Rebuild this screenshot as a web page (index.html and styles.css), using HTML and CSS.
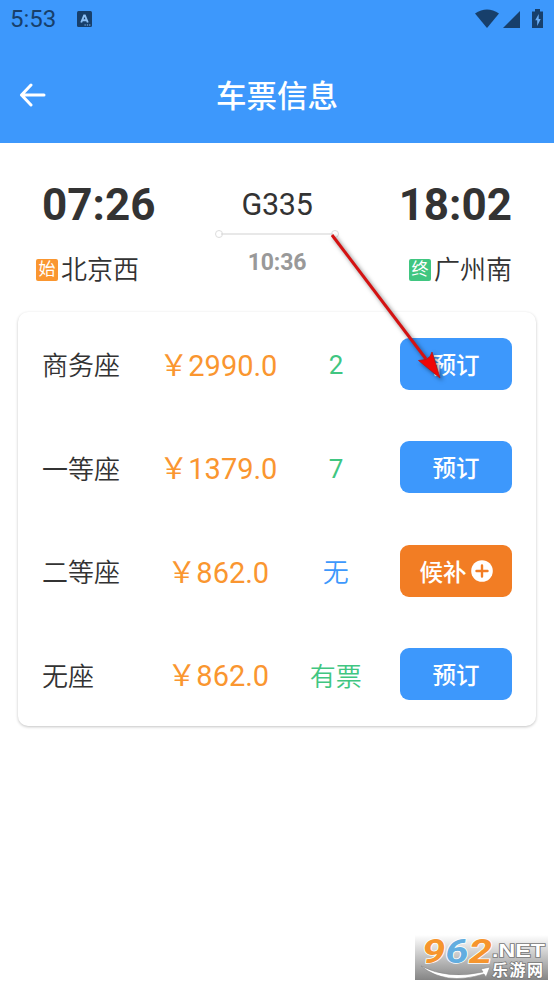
FILE: index.html
```html
<!DOCTYPE html>
<html lang="zh-CN">
<head>
<meta charset="utf-8">
<title>车票信息</title>
<link rel="stylesheet" href="styles.css">
</head>
<body>
<header class="header">
  <div class="status">
    <span class="clock">5:53</span>
    <svg class="app-icon" width="15" height="16" viewBox="0 0 15 16"><rect width="15" height="16" rx="1.5" fill="#173f6b"/><path d="M4.2 11.5 7.1 4.5h.8l2.9 7M5.4 9.3h4.2" fill="none" stroke="#8dc0f5" stroke-width="1.9"/><path d="M7.5 14h6" stroke="#8dc0f5" stroke-dasharray="1.3 1"/></svg>
    <svg class="system" width="69" height="20" viewBox="0 0 69 20"><g fill="#173f6b"><path d="M0 4.5Q12-3.5 24 4.5L12 19Z"/><path d="M28 19H45V2Z"/><path d="M57 2.500h3V0h5v2.500h3v16.500H57Z"/></g><path d="M63.7 5 60.2 11.3H62.2V17L65.7 10H63.7Z" fill="#69adf5"/></svg>
  </div>
  <div class="titlebar">
    <svg class="back" width="28" height="24" viewBox="0 0 28 24"><path d="M12 2 2.500 12 12 22M2.500 12H25" fill="none" stroke="#fff" stroke-width="3" stroke-linecap="round" stroke-linejoin="round"/></svg>
    <h1 class="title">车票信息</h1>
  </div>
</header>
<main>
  <section class="trip">
    <div class="end">
      <div class="time">07:26</div>
      <div class="station"><span class="tag tag-start">始</span>北京西</div>
    </div>
    <div class="train">
      <div class="number">G335</div>
      <div class="route"></div>
      <div class="duration">10:36</div>
    </div>
    <div class="end end-right">
      <div class="time">18:02</div>
      <div class="station"><span class="tag tag-end">终</span>广州南</div>
    </div>
  </section>
  <section class="card">
    <div class="row"><span class="seat">商务座</span><span class="price">￥2990.0</span><span class="left num">2</span><button class="btn">预订</button></div>
    <div class="row"><span class="seat">一等座</span><span class="price">￥1379.0</span><span class="left num">7</span><button class="btn">预订</button></div>
    <div class="row"><span class="seat">二等座</span><span class="price">￥862.0</span><span class="left none">无</span><button class="btn wait">候补<svg width="22" height="22" viewBox="0 0 22 22"><circle cx="11" cy="11" r="10.8" fill="#fff"/><path d="M11 5.5v11M5.5 11h11" stroke="#f27d24" stroke-width="2.4" stroke-linecap="round"/></svg></button></div>
    <div class="row"><span class="seat">无座</span><span class="price">￥862.0</span><span class="left">有票</span><button class="btn">预订</button></div>
  </section>
</main>
<svg class="pointer" width="130" height="160" viewBox="0 0 130 160"><path d="M7 6 101 130" stroke="#d41212" stroke-width="3"/><path d="M115 149 93.500 131.500 101 130.500 105 127.500 107 123Z" fill="#f00505" stroke="#b91414" stroke-width=".8"/></svg>
<svg class="watermark" width="133" height="45" viewBox="0 0 133 45">
  <defs><linearGradient id="shade" x1="0" y1="0" x2="0" y2="1"><stop offset="0" stop-color="#fff"/><stop offset="1" stop-color="#858585"/></linearGradient></defs>
  <rect width="133" height="45" fill="url(#shade)"/>
  <text class="digits" x="7" y="28" textLength="70" lengthAdjust="spacingAndGlyphs"><tspan fill="#f6952d">9</tspan><tspan fill="#62ade0">6</tspan><tspan fill="#f6952d">2</tspan></text>
  <path d="M6 31Q33 45 68 37L66 34 75 32 71 42 69 39Q30 51 6 31Z" fill="#fff" stroke="#888" stroke-width=".6"/>
  <text class="net" x="77" y="22" textLength="53" lengthAdjust="spacingAndGlyphs">.NET</text>
  <text class="brand" x="77" y="41" textLength="51">乐游网</text>
</svg>
</body>
</html>
```
FILE: styles.css
```css
* { box-sizing: border-box; }
body {
  margin: 0;
  height: 986px;
  overflow: hidden;
  position: relative;
  background: #fff;
  color: #333;
  font-family: Roboto, "Noto Sans CJK SC", sans-serif;
}
.header { height: 143px; background: #3d98fc; }
.status {
  height: 38px;
  padding: 0 10px;
  display: flex;
  align-items: center;
  color: #173f6b;
}
.clock { width: 67px; font-size: 24px; line-height: 38px; }
.system { margin: 0 0 1px auto; }
.titlebar {
  height: 114px;
  display: grid;
  grid-template-columns: 60px 1fr 60px;
  align-items: center;
}
.back { margin-left: 19px; }
.title {
  margin: 0;
  padding-top: 3px;
  text-align: center;
  color: #fff;
  font-size: 30.5px;
  font-weight: 500;
  line-height: 40px;
}
.trip {
  height: 169px;
  padding: 36px 42px 0;
  display: flex;
  justify-content: space-between;
}
.end { width: 114px; }
.time { font-size: 44px; font-weight: 700; line-height: 53px; white-space: nowrap; }
.station {
  height: 32px;
  margin: 22px 0 0 -6px;
  display: flex;
  align-items: center;
  font-size: 26px;
  font-weight: 350;
  line-height: 32px;
  white-space: nowrap;
}
.end-right { display: flex; flex-direction: column; align-items: flex-end; }
.end-right .station { margin-left: 0; }
.tag {
  width: 22px;
  height: 22px;
  margin: 0 3px 1px 0;
  border-radius: 2px;
  color: #fff;
  font-size: 17px;
  font-weight: 400;
  line-height: 21px;
  text-align: center;
}
.tag-start { background: #fa9630; }
.tag-end { background: #40c681; }
.train { width: 124px; text-align: center; }
.number { font-size: 30.5px; line-height: 52px; letter-spacing: -.3px; }
.route {
  height: 6px;
  display: flex;
  align-items: center;
  justify-content: space-between;
  background: linear-gradient(#e8e8e8, #e8e8e8) center / 112px 2px no-repeat;
}
.route::before, .route::after {
  content: "";
  width: 6px;
  height: 6px;
  border: 1px solid #ddd;
  border-radius: 50%;
}
.duration { margin-top: 11px; color: #999; font-size: 23px; font-weight: 700; line-height: 30px; letter-spacing: -.2px; }
.card {
  height: 414px;
  margin: 0 18px;
  padding: 0 24px;
  display: grid;
  grid-template-rows: repeat(4, 1fr);
  border-radius: 10px;
  box-shadow: 0 1px 3px rgba(0, 0, 0, .24);
}
.row {
  display: grid;
  grid-template-columns: repeat(4, 1fr);
  align-items: center;
  font-size: 26px;
}
.seat, .left { font-weight: 350; }
.price { padding-bottom: 2px; color: #fa9630; font-size: 29px; text-align: center; white-space: nowrap; }
.left { color: #40c681; text-align: center; }
.left.num { padding-top: 3px; font-weight: 400; }
.left.none { color: #3d98fc; }
.btn {
  width: 112px;
  height: 52px;
  justify-self: end;
  display: flex;
  align-items: center;
  justify-content: center;
  gap: 4px;
  padding: 0;
  border: 0;
  border-radius: 9px;
  background: #3d98fc;
  color: #fff;
  font: 500 23.5px "Noto Sans CJK SC", sans-serif;
}
.wait { background: #f27d24; }
.pointer {
  position: absolute;
  left: 325px;
  top: 229px;
  filter: drop-shadow(2px 2px 2px rgba(0, 0, 0, .5));
}
.watermark { position: absolute; left: 415px; top: 935px; }
.digits {
  font: italic 700 33px Roboto, sans-serif;
  stroke: #fff;
  stroke-width: 1.5px;
  paint-order: stroke;
}
.net, .brand { fill: #fff; stroke: #777; stroke-width: 1.5px; paint-order: stroke; }
.net { font: 700 18px "Liberation Sans", sans-serif; }
.brand { font: 700 16px "Noto Sans CJK SC", sans-serif; }
```
